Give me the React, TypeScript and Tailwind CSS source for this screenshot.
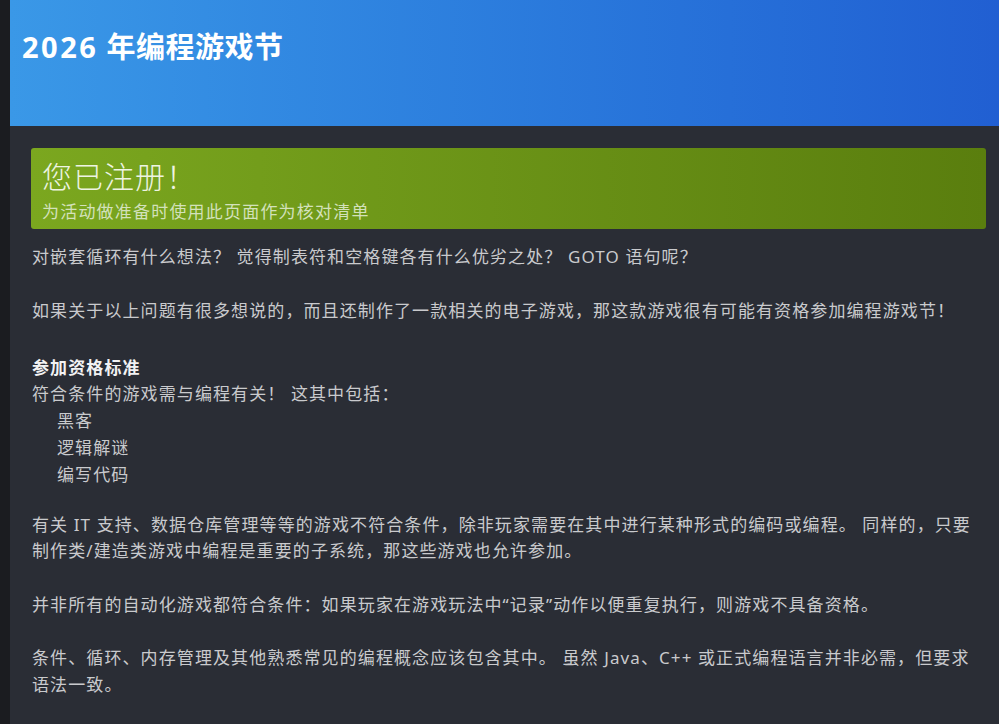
import React from 'react';

const FONT = '"Noto Sans", "Noto Sans CJK SC", sans-serif';

const App = () => {
  return (
    <div className="flex min-h-[724px] bg-[#1b1c20]" style={{ fontFamily: FONT }}>
      <div className="w-[10px] shrink-0" />
      <div className="flex-1 bg-[#2a2d35]">
        {/* Header */}
        <header className="h-[126px] bg-gradient-to-r from-[#3a98e7] to-[#215fd2] pl-3 pt-[28px]">
          <h1 className="text-[29px] font-bold leading-[38px] tracking-[0.5px] text-white">
            <span className="tracking-[2.5px]">2026</span> 年编程游戏节
          </h1>
        </header>

        <div className="pl-[21px] pr-[13px] pt-[22px]">
          {/* Registered banner */}
          <div className="h-[81px] rounded-[3px] bg-gradient-to-r from-[#7ba71f] to-[#5a7e0e] px-[11px] pt-[11px]">
            <div className="text-[30px] font-light leading-[36px] tracking-[1px] text-[#eef4e2]">
              您已注册！
            </div>
            <div className="mt-[6px] text-[17px] leading-[22px] tracking-[1.2px] text-[#d3e1bb]">
              为活动做准备时使用此页面作为核对清单
            </div>
          </div>

          {/* Body */}
          <div className="mt-[15px] pl-px text-[17px] leading-[26.75px] tracking-[1.1px] text-[#c9cacd]">
            <p className="mb-[26.75px]">
              对嵌套循环有什么想法？ 觉得制表符和空格键各有什么优劣之处？ GOTO 语句呢？
            </p>
            <p className="mb-[26.75px]">
              如果关于以上问题有很多想说的，而且还制作了一款相关的电子游戏，那这款游戏很有可能有资格参加编程游戏节！
            </p>
            <div className="mb-[23.25px] pt-[3.5px]">
              <div className="font-bold text-[#f2f2f3]">参加资格标准</div>
              <div>符合条件的游戏需与编程有关！ 这其中包括：</div>
              <ul className="pl-[25px]">
                <li>黑客</li>
                <li>逻辑解谜</li>
                <li>编写代码</li>
              </ul>
            </div>
            <p className="mb-[26.75px]">
              有关 IT 支持、数据仓库管理等等的游戏不符合条件，除非玩家需要在其中进行某种形式的编码或编程。 同样的，只要
              <br />
              制作类/建造类游戏中编程是重要的子系统，那这些游戏也允许参加。
            </p>
            <p className="mb-[26.75px]">
              并非所有的自动化游戏都符合条件：如果玩家在游戏玩法中“记录”动作以便重复执行，则游戏不具备资格。
            </p>
            <p>
              条件、循环、内存管理及其他熟悉常见的编程概念应该包含其中。 虽然 Java、C++ 或正式编程语言并非必需，但要求
              <br />
              语法一致。
            </p>
          </div>
        </div>
      </div>
    </div>
  );
};

export default App;
